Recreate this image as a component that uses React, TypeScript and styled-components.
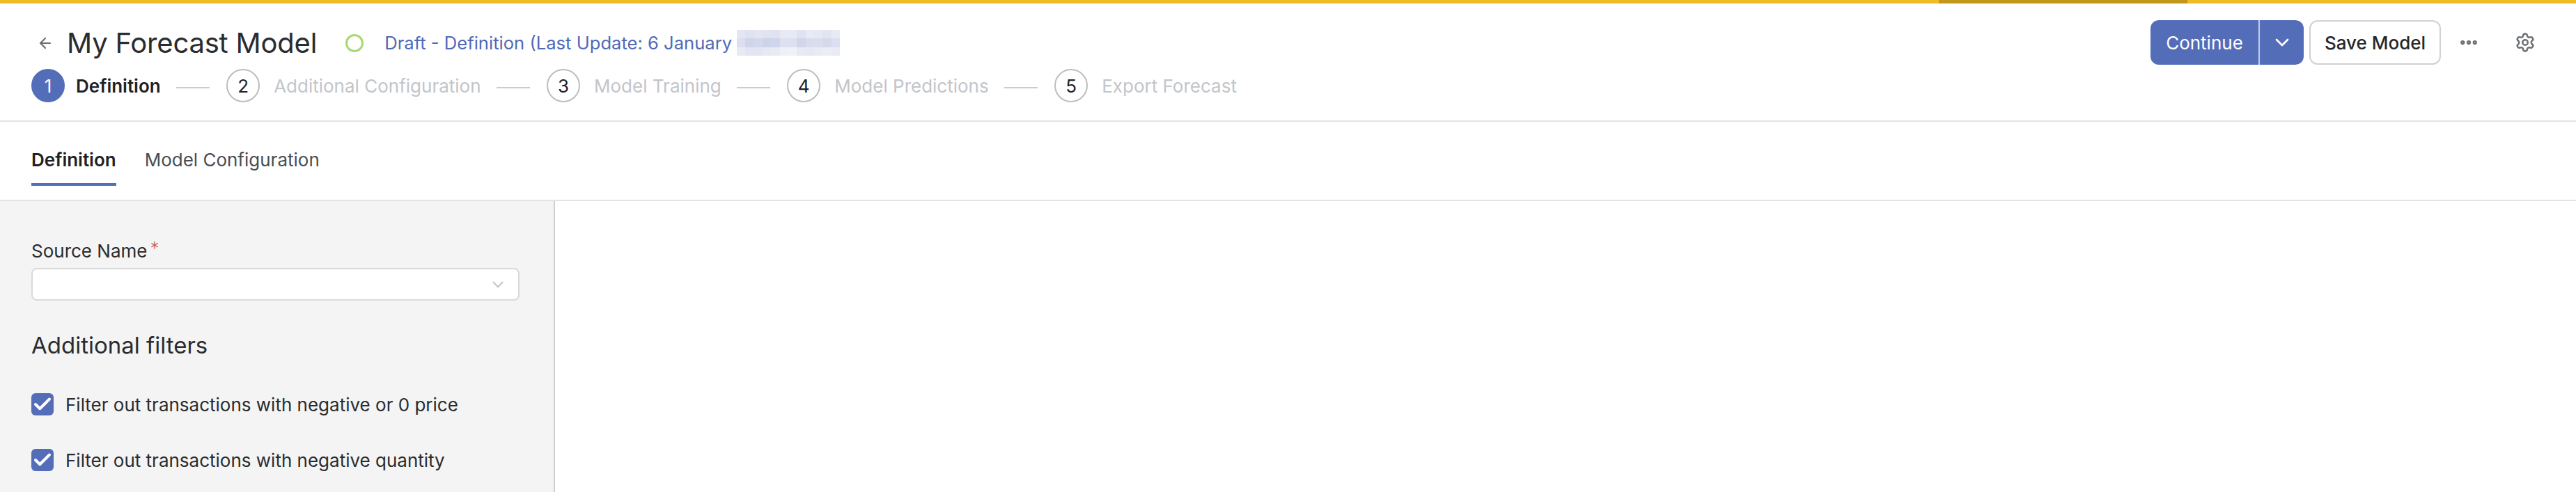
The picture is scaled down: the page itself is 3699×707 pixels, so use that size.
import { ArrowLeft, ChevronDown, Check, Ellipsis, Settings } from "lucide-react";
import styled, { createGlobalStyle } from "styled-components";

const GlobalStyle = createGlobalStyle`
  html, body {
    margin: 0;
    padding: 0;
    height: 100%;
    background: #fff;
  }
  * {
    box-sizing: border-box;
  }
  body {
    font-family: Inter, "Liberation Sans", sans-serif;
    color: #26282b;
  }
`;

const Page = styled.div`
  height: 707px;
  overflow: hidden;
  display: flex;
  flex-direction: column;
`;

const TopBar = styled.div`
  height: 5px;
  flex-shrink: 0;
  display: flex;
  background: #f0bc26;
`;

const TopBarSegment = styled.div<{ $left: number; $width: number }>`
  margin-left: ${(p) => p.$left}px;
  width: ${(p) => p.$width}px;
  background: #c1971c;
`;

const Header = styled.header`
  height: 170px;
  flex-shrink: 0;
  border-bottom: 2px solid #e3e3e3;
  padding: 24px 58px 0 45px;
  display: flex;
  justify-content: space-between;
`;

const HeaderLeft = styled.div`
  display: flex;
  flex-direction: column;
  gap: 9px;
  padding-top: 4px;
`;

const TitleRow = styled.div`
  display: flex;
  align-items: center;
  height: 57px;
  padding-left: 8px;
`;

const BackIcon = styled(ArrowLeft)`
  width: 24px;
  height: 24px;
  color: #6b7075;
  stroke-width: 2.2;
  margin-right: 19px;
`;

const Title = styled.h1`
  margin: 0;
  font-size: 40px;
  font-weight: 400;
  letter-spacing: -0.2px;
  color: #2a2c2f;
`;

const StatusRing = styled.span`
  width: 26px;
  height: 26px;
  border: 3px solid #a9d873;
  border-radius: 50%;
  margin-left: 41px;
`;

const StatusText = styled.span`
  margin-left: 30px;
  font-size: 25.6px;
  color: #5069b8;
`;

const Redaction = styled.div`
  position: relative;
  margin-left: 7px;
  width: 148px;
  height: 37px;
  display: grid;
  grid-template-columns: repeat(12, 1fr);
  grid-template-rows: repeat(3, 1fr);

  &::before {
    content: "";
    position: absolute;
    left: -8px;
    top: 4px;
    bottom: 4px;
    width: 8px;
    background: #f1f2f9;
    z-index: -1;
  }
`;

const RedactionCell = styled.span<{ $tone: string }>`
  background: ${(p) => p.$tone};
`;

const Steps = styled.ol`
  list-style: none;
  margin: 0;
  padding: 0;
  display: flex;
  align-items: center;
`;

const Step = styled.li`
  display: flex;
  align-items: center;
`;

const StepCircle = styled.span<{ $active?: boolean }>`
  width: 48px;
  height: 48px;
  border-radius: 50%;
  display: flex;
  align-items: center;
  justify-content: center;
  font-size: 26px;
  color: ${(p) => (p.$active ? "#fff" : "#1f2124")};
  background: ${(p) => (p.$active ? "#536db8" : "#fff")};
  border: 2px solid ${(p) => (p.$active ? "#536db8" : "#bdbdbd")};
`;

const StepLabel = styled.span<{ $active?: boolean }>`
  margin-left: ${(p) => (p.$active ? 16 : 20)}px;
  font-size: 26px;
  font-weight: ${(p) => (p.$active ? 600 : 400)};
  color: ${(p) => (p.$active ? "#1f2124" : "#c2c5ca")};
`;

const StepLine = styled.span`
  width: 48px;
  height: 2px;
  margin: 5px 24px 0 22.5px;
  background: #cbcbcf;
`;

const Actions = styled.div`
  display: flex;
  align-items: center;
  height: 64px;
`;

const SplitButton = styled.div`
  display: flex;
  width: 220px;
  height: 64px;
  border-radius: 12px;
  background: #536db8;
  color: #fff;
  font-size: 26px;
`;

const SplitMain = styled.span`
  width: 157px;
  display: flex;
  align-items: center;
  justify-content: center;
  border-right: 2px solid #c3cce8;
`;

const SplitCaret = styled.span`
  flex: 1;
  display: flex;
  align-items: center;
  justify-content: center;
`;

const SaveButton = styled.button`
  margin-left: 8px;
  width: 189px;
  height: 64px;
  border: 2px solid #d0d0d6;
  border-radius: 12px;
  background: #fff;
  font: inherit;
  font-size: 26px;
  font-weight: 500;
  color: #26282b;
`;

const MoreIcon = styled(Ellipsis)`
  margin-left: 25px;
  width: 30px;
  height: 30px;
  color: #6b7075;
  stroke-width: 3;
`;

const GearIcon = styled(Settings)`
  margin-left: 51px;
  width: 30px;
  height: 30px;
  color: #6b7075;
`;

const Tabs = styled.nav`
  height: 114px;
  flex-shrink: 0;
  border-bottom: 2px solid #e3e3e3;
  padding: 0 45px;
  display: flex;
  gap: 41px;
`;

const Tab = styled.a<{ $active?: boolean }>`
  height: 92px;
  display: flex;
  align-items: center;
  padding-top: 20px;
  font-size: 26px;
  font-weight: ${(p) => (p.$active ? 600 : 400)};
  color: ${(p) => (p.$active ? "#1f2124" : "#4a4d52")};
  border-bottom: 4px solid ${(p) => (p.$active ? "#536db8" : "transparent")};
`;

const Main = styled.main`
  flex: 1;
  display: flex;
  min-height: 0;
`;

const Sidebar = styled.aside`
  width: 797px;
  flex-shrink: 0;
  background: #f4f4f4;
  border-right: 2px solid #cfcfcf;
  padding: 56px 49px 0 45px;
`;

const FieldLabel = styled.label`
  display: block;
  font-size: 26px;
  line-height: 32px;
  color: #2a2c2f;
`;

const Required = styled.span`
  position: relative;
  top: -4px;
  margin-left: 4px;
  font-weight: 300;
  color: #c8625f;
`;

const Select = styled.div`
  margin-top: 8px;
  height: 47px;
  background: #fff;
  border: 2px solid #d9d9d9;
  border-radius: 8px;
  display: flex;
  align-items: center;
  justify-content: flex-end;
  padding-right: 16px;
  color: #c4c4c4;
`;

const SectionTitle = styled.h2`
  margin: 44px 0 49px;
  font-size: 33px;
  font-weight: 400;
  line-height: 40px;
  color: #2a2c2f;
`;

const FilterList = styled.div`
  display: flex;
  flex-direction: column;
  gap: 48px;
`;

const FilterRow = styled.label`
  display: flex;
  align-items: center;
  gap: 17px;
  height: 32px;
  font-size: 26px;
  color: #2a2c2f;
`;

const CheckBox = styled.span`
  width: 32px;
  height: 32px;
  flex-shrink: 0;
  border-radius: 6px;
  background: #536db8;
  color: #fff;
  display: flex;
  align-items: center;
  justify-content: center;
`;

const steps = [
  "Definition",
  "Additional Configuration",
  "Model Training",
  "Model Predictions",
  "Export Forecast",
];

const filters = [
  "Filter out transactions with negative or 0 price",
  "Filter out transactions with negative quantity",
];

// pixelated patch over the date in the status line
const redactionTones = [
  "#e3e6f3", "#dfe2f0", "#e3e5f2", "#e0e3f0", "#dfe2f0", "#e7e9f4", "#e7e9f4", "#dfe3f1", "#e8eaf5", "#e6e8f4", "#e0e5f0", "#e8ebf6",
  "#dbdfef", "#d0d5ea", "#d3d8ec", "#cdd3e9", "#cfd5ea", "#dde0f0", "#dde0f0", "#d1d6eb", "#d8dcee", "#d9ddee", "#d5d9ec", "#dcdff0",
  "#e8eaf5", "#e3e5f2", "#e3e5f2", "#e6e8f3", "#e8eaf5", "#eef0f8", "#f0f2f9", "#e7e9f5", "#e6e8f4", "#e8eaf5", "#eceef7", "#e8eaf5",
];

export default function App() {
  return (
    <>
      <GlobalStyle />
      <Page>
        <TopBar>
          <TopBarSegment $left={2784} $width={357} />
        </TopBar>
        <Header>
          <HeaderLeft>
            <TitleRow>
              <BackIcon />
              <Title>My Forecast Model</Title>
              <StatusRing />
              <StatusText>Draft - Definition (Last Update: 6 January</StatusText>
              <Redaction>
                {redactionTones.map((tone, idx) => (
                  <RedactionCell key={idx} $tone={tone} />
                ))}
              </Redaction>
            </TitleRow>
            <Steps>
              {steps.map((label, idx) => (
                <Step key={label}>
                  {idx > 0 && <StepLine />}
                  <StepCircle $active={idx === 0}>{idx + 1}</StepCircle>
                  <StepLabel $active={idx === 0}>{label}</StepLabel>
                </Step>
              ))}
            </Steps>
          </HeaderLeft>
          <Actions>
            <SplitButton>
              <SplitMain>Continue</SplitMain>
              <SplitCaret>
                <ChevronDown size={32} strokeWidth={2} />
              </SplitCaret>
            </SplitButton>
            <SaveButton>Save Model</SaveButton>
            <MoreIcon />
            <GearIcon />
          </Actions>
        </Header>
        <Tabs>
          <Tab $active>Definition</Tab>
          <Tab>Model Configuration</Tab>
        </Tabs>
        <Main>
          <Sidebar>
            <FieldLabel>
              Source Name<Required>*</Required>
            </FieldLabel>
            <Select>
              <ChevronDown size={26} strokeWidth={2} />
            </Select>
            <SectionTitle>Additional filters</SectionTitle>
            <FilterList>
              {filters.map((label) => (
                <FilterRow key={label}>
                  <CheckBox>
                    <Check size={30} strokeWidth={3.2} />
                  </CheckBox>
                  {label}
                </FilterRow>
              ))}
            </FilterList>
          </Sidebar>
        </Main>
      </Page>
    </>
  );
}
